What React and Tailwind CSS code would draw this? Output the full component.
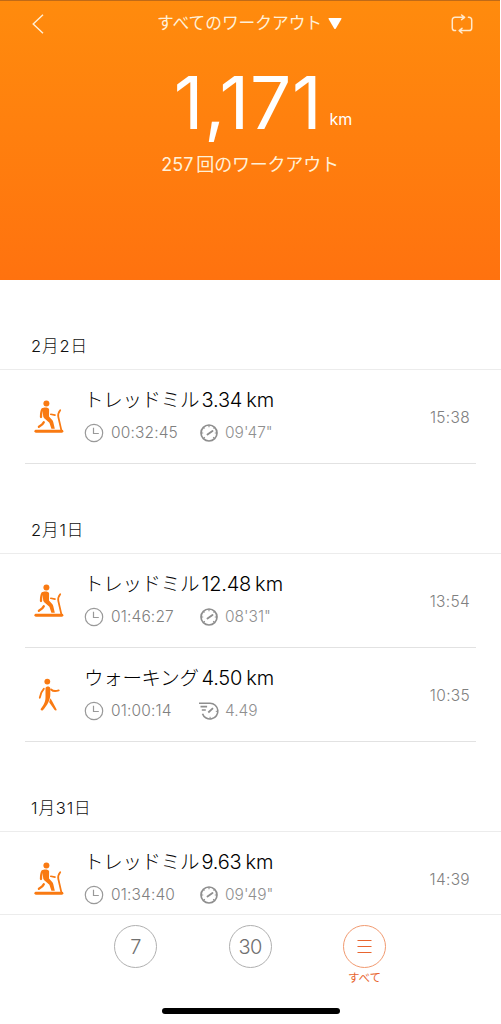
import React, { useState } from 'react'

const sections = [
  {
    date: '2月2日',
    workouts: [
      { type: 'treadmill', name: 'トレッドミル', distance: '3.34', duration: '00:32:45', pace: '09\'47"', time: '15:38' },
    ],
  },
  {
    date: '2月1日',
    workouts: [
      { type: 'treadmill', name: 'トレッドミル', distance: '12.48', duration: '01:46:27', pace: '08\'31"', time: '13:54' },
      { type: 'walking', name: 'ウォーキング', distance: '4.50', duration: '01:00:14', speed: '4.49', time: '10:35' },
    ],
  },
  {
    date: '1月31日',
    workouts: [
      { type: 'treadmill', name: 'トレッドミル', distance: '9.63', duration: '01:34:40', pace: '09\'49"', time: '14:39' },
    ],
  },
]

function BackIcon() {
  return (
    <svg width="12" height="20" viewBox="0 0 12 20" fill="none" stroke="#fff0d8" strokeWidth="1.4">
      <path d="M11 .7 1.2 10 11 19.3" />
    </svg>
  )
}

function SyncIcon() {
  return (
    <svg width="22" height="20" viewBox="0 0 22 20" fill="none" stroke="#ffe9cc" strokeWidth="1.5" strokeLinecap="round" strokeLinejoin="round">
      <path d="M4.6 16.6H4a2.7 2.7 0 0 1-2.7-2.7V6A2.7 2.7 0 0 1 4 3.3h9.4M10.6 1l3 2.3-3 2.3" />
      <path d="M17.4 3.3H18A2.7 2.7 0 0 1 20.7 6v7.9a2.7 2.7 0 0 1-2.7 2.7H8.4M11 14.3l-2.8 2.3 2.8 2.4" />
    </svg>
  )
}

function TreadmillIcon() {
  return (
    <svg width="30" height="34" viewBox="0 0 30 34" fill="none" stroke="#f97a12" strokeLinecap="round" strokeLinejoin="round">
      <circle cx="12.4" cy="3.4" r="3" fill="#f97a12" stroke="none" />
      <path d="M8.2 8.3c1.7-1.2 6.6-1 6.9 1.1l-.1 7.2 3.2 3.5c.6.7.9 1.3 1.1 2.1l1.5 6.6h-3.4l-2-6-4.9-4.3c-1-1-1.4-1.9-1.4-3.2z" fill="#f97a12" stroke="none" />
      <path d="M8.5 9.2C7.3 11 7 13.5 7 17" strokeWidth="2.3" />
      <path d="M9.8 22.2c-.9 2.2-2.5 3.2-4.9 4.6" strokeWidth="2.3" />
      <path d="m16.8 14.3 4.2.8" strokeWidth="1.6" />
      <path d="M26.2 10.2c-2.2 2.8-2.5 4-1.9 6.7l3.2 14" strokeWidth="1.8" />
      <path d="M1.9 31.2h26" strokeWidth="2.9" />
    </svg>
  )
}

function WalkingIcon() {
  return (
    <svg width="23" height="34" viewBox="0 0 23 34" fill="#f97a12">
      <circle cx="10.3" cy="3.6" r="2.9" />
      <path d="M8.5 10.2C8.8 8 13 8 13.3 10.2v6.6c0 5-3 10.6-7.2 15.2-1.2 1.2-3 .2-2.3-1.2C7.5 26 8.6 23 8.5 18.5z" />
      <path d="m13.5 20.2 1.7 3.1 4.3 7.9c.5 1.2-.9 1.9-1.9.9l-5.3-7.6c-.3-.8.6-2.8 1.2-4.3z" />
      <g fill="none" stroke="#f97a12" strokeWidth="1.9" strokeLinecap="round">
        <path d="M6.8 10.8C4.5 13.2 3.4 15.8 2.8 19.7" />
        <path d="M14.1 11.5c2 2 4.4 2 7.6.9" />
      </g>
    </svg>
  )
}

function ClockIcon() {
  return (
    <svg width="20" height="20" viewBox="0 0 20 20" fill="none" stroke="#999" strokeWidth="1.2">
      <circle cx="10" cy="10" r="8.7" />
      <path d="M9.5 4.8v5.7h5.3" />
    </svg>
  )
}

function PaceIcon() {
  return (
    <svg width="20" height="20" viewBox="0 0 20 20" fill="none" stroke="#8e8e8e" strokeWidth="1.7">
      <circle cx="10" cy="10" r="8" />
      <path d="m8.5 11.5 5-3.500" strokeWidth="1.9" strokeLinecap="round" />
      <path d="M10 2v2.2M2 10h2.2M15.8 10H18M4.3 4.3l1.2 1.2M15.7 4.3l-1.2 1.2M4.6 15.4l1.2-1.2M15.4 15.4l-1.2-1.2" strokeWidth="1.1" />
    </svg>
  )
}

function SpeedIcon() {
  return (
    <svg width="20" height="20" viewBox="0 0 20 20" fill="none" stroke="#8e8e8e" strokeWidth="1.6">
      <path d="M0 2.2h11a7.9 7.9 0 1 1-7.5 10.5" />
      <path d="M1.5 5.6h6.6M2.8 9h4" />
      <path d="m9.3 11.5 4.7-4.3" strokeWidth="1.8" />
      <path d="M16.8 10.3h2M11.1 15.8V18" strokeWidth="1" />
    </svg>
  )
}

function WorkoutRow({ workout }) {
  return (
    <li className="h-[94px] px-[25px]">
      <div className="flex h-full border-b border-[#e2e2e2] pl-2 pr-[6px]">
        <div className="flex w-[31px] shrink-0 justify-center pt-[30px]">
          {workout.type === 'treadmill' ? <TreadmillIcon /> : <WalkingIcon />}
        </div>
        <div className="flex-1 pl-5 pt-4">
          <h3 className="flex h-[28px] items-center whitespace-nowrap text-[20px] font-light leading-[28px] text-black">
            <span className="w-[117.5px] text-[19.5px] tracking-[-0.3px]">{workout.name}</span>
            <span className="mr-1 tracking-[-0.2px]">{workout.distance}</span>
            <span>km</span>
          </h3>
          <div className="mt-[9px] flex h-5 items-center text-[15.5px] font-light leading-5 text-[#808080]">
            <span className="flex w-[115px] items-center gap-[7px]">
              <ClockIcon />
              <span className="tracking-[0.15px]">{workout.duration}</span>
            </span>
            <span className="flex items-center gap-[6px]">
              {workout.pace ? <PaceIcon /> : <SpeedIcon />}
              <span className="text-[#8f8f8f]">{workout.pace || workout.speed}</span>
            </span>
          </div>
        </div>
        <time className="pt-[38px] text-[15.5px] font-light leading-5 tracking-[0.3px] text-[#808080]">{workout.time}</time>
      </div>
    </li>
  )
}

function RangeButton({ active, onClick, children }) {
  return (
    <button
      className={`flex size-[43px] items-center justify-center rounded-full border text-[20px] font-light tracking-[-0.8px] ${active ? 'border-[#f19a70] text-[#e8652f]' : 'border-[#b0b0b0] text-[#707070]'}`}
      onClick={onClick}
    >
      {children}
    </button>
  )
}

function App() {
  const [range, setRange] = useState('all')

  return (
    <div className="flex h-screen flex-col overflow-hidden bg-white font-['Inter','Noto_Sans_CJK_JP',sans-serif]">
      {/* Summary */}
      <header className="mr-px h-[280px] shrink-0 border-t border-[#c06a17] bg-linear-to-b from-[#ff8b0d] to-[#ff720f] text-white">
        <nav className="flex h-[46px] items-center justify-between pl-8 pr-[27px]">
          <button><BackIcon /></button>
          <button className="flex items-center gap-[6px] pl-1 text-[#fff0d8]">
            <span className="text-[16.7px]">すべてのワークアウト</span>
            <svg width="14" height="12" viewBox="0 0 14 12" fill="#fff">
              <path d="M1 0h12q.8.2.4 1L7.7 10.7q-.7.8-1.4 0L.6 1Q.2.2 1 0" />
            </svg>
          </button>
          <button><SyncIcon /></button>
        </nav>
        <div className="flex items-end justify-center gap-[7px] pl-[26px] pt-[20px]">
          <span className="text-[73px] leading-[72px] tracking-[0.7px]">1,171</span>
          <span className="pb-[10px] text-[16px] leading-5">km</span>
        </div>
        <p className="mt-[14px] flex items-center justify-center gap-[3px] text-[18px] leading-6 text-[#fff0d8]">
          <span>257</span>
          <span className="tracking-[-0.2px]">回のワークアウト</span>
        </p>
      </header>

      <main className="min-h-0 flex-1 overflow-hidden">
        {sections.map((section) => (
          <section key={section.date}>
            <h2 className="flex h-[90px] items-end border-b border-[#ececec] pb-[11px] pl-[31px] text-[16.5px] font-light leading-6 tracking-[0.9px] text-[#111]">
              {section.date}
            </h2>
            <ul>
              {section.workouts.map((workout) => (
                <WorkoutRow key={workout.time} workout={workout} />
              ))}
            </ul>
          </section>
        ))}
      </main>

      {/* Range selector */}
      <footer className="flex h-[110px] shrink-0 flex-col items-center border-t border-[#ececec] bg-white">
        <div className="flex h-[93px] w-full justify-center gap-[71.5px] pt-[10px] pr-px">
          <RangeButton active={range === '7'} onClick={() => setRange('7')}>7</RangeButton>
          <RangeButton active={range === '30'} onClick={() => setRange('30')}>30</RangeButton>
          <div className="flex flex-col items-center">
            <RangeButton active={range === 'all'} onClick={() => setRange('all')}>
              <svg width="16" height="16" viewBox="0 0 16 16" stroke="currentColor" strokeWidth="1.2">
                <path d="M.5 1.5h14M.5 7.5h14M.5 13.5h14" />
              </svg>
            </RangeButton>
            <span className="text-[11.5px] leading-5 text-[#e8652f]">すべて</span>
          </div>
        </div>
        <div className="h-[6px] w-[178px] rounded-full bg-black" />
      </footer>
    </div>
  )
}

export default App
